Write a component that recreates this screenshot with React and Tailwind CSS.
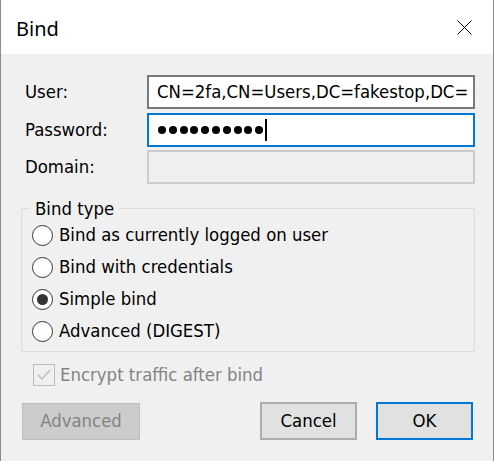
import React from 'react';

const font = "font-['DejaVu_Sans_Condensed','Liberation_Sans',sans-serif]";

const Radio = ({ checked, label }) => (
  <div className="flex items-center h-[32px] pl-[10px]">
    <div className="w-[21px] h-[21px] rounded-full border border-[#333333] bg-white flex items-center justify-center shrink-0">
      {checked && <div className="w-[11px] h-[11px] rounded-full bg-[#333333]" />}
    </div>
    <span className="ml-[6px] text-[18.4px] text-black leading-none">{label}</span>
  </div>
);

export default function App() {
  return (
    <div className={`w-[494px] h-[461px] bg-[#f0f0f0] border-x border-[#8c8c8c] flex flex-col ${font}`}>
      {/* Title bar */}
      <div className="h-[54px] bg-white flex items-center justify-between pl-[15px] pr-[21px] shrink-0">
        <span className="mt-[3px] font-['Noto_Sans',sans-serif] text-[20px] text-black leading-none">Bind</span>
        <svg width="15" height="15" viewBox="0 0 15 15" className="mt-[1px]">
          <path d="M0.5 0.5 L14.5 14.5 M14.5 0.5 L0.5 14.5" stroke="#000" strokeWidth="1" />
        </svg>
      </div>

      {/* Content */}
      <div className="flex-1 pl-[20px] pr-[18px] pt-[21px]">
        <div className="flex items-center h-[34px]">
          <label className="w-[126px] pl-[4px] text-[18.4px] text-black">User:</label>
          <div className="flex-1 h-full bg-white border-2 border-[#7a7a7a] flex items-center pl-[8px] overflow-hidden">
            <span className="text-[18.4px] text-black whitespace-nowrap">CN=2fa,CN=Users,DC=fakestop,DC=</span>
          </div>
        </div>
        <div className="flex items-center h-[34px] mt-[4px]">
          <label className="w-[126px] pl-[4px] text-[18.4px] text-black">Password:</label>
          <div className="flex-1 h-full bg-white border-2 border-[#0078d7] flex items-center pl-[9px]">
            <div className="flex gap-[2.8px]">
              {Array.from({ length: 10 }).map((_, i) => (
                <div key={i} className="w-[8px] h-[8px] rounded-full bg-black" />
              ))}
            </div>
            <div className="w-[1.5px] h-[22px] bg-black ml-[2px]" />
          </div>
        </div>
        <div className="flex items-center h-[34px] mt-[3px]">
          <label className="w-[126px] pl-[4px] text-[18.4px] text-black">Domain:</label>
          <div className="flex-1 h-full bg-[#f0f0f0] border-2 border-[#cccccc]" />
        </div>

        {/* Bind type group */}
        <fieldset className="mt-[14px] border border-[#dcdcdc] pb-[4px]">
          <legend className="ml-[8px] px-[5px] text-[18.4px] leading-[21px] text-black">Bind type</legend>
          <Radio label="Bind as currently logged on user" />
          <Radio label="Bind with credentials" />
          <Radio checked label="Simple bind" />
          <Radio label="Advanced (DIGEST)" />
        </fieldset>

        {/* Encrypt checkbox */}
        <div className="flex items-center h-[24px] mt-[11px] pl-[12px]">
          <div className="w-[22px] h-[22px] border border-[#bcbcbc] bg-[#f0f0f0] flex items-center justify-center shrink-0">
            <svg width="16" height="16" viewBox="0 0 16 16">
              <path d="M2 8 L6 12 L14 3" fill="none" stroke="#bcbcbc" strokeWidth="1.4" />
            </svg>
          </div>
          <span className="ml-[5px] text-[18.4px] text-[#838383] leading-none">Encrypt traffic after bind</span>
        </div>

        {/* Buttons */}
        <div className="flex items-center mt-[15px] pr-[2px]">
          <button className="ml-[1px] w-[118px] h-[37px] bg-[#cccccc] border border-[#bfbfbf] text-[18.4px] text-[#838383]">
            Advanced
          </button>
          <div className="flex-1" />
          <button className="w-[97px] h-[38px] bg-[#e1e1e1] border-2 border-[#adadad] text-[18.4px] text-black">
            Cancel
          </button>
          <button className="ml-[19px] w-[97px] h-[38px] bg-[#e1e1e1] border-2 border-[#0078d7] text-[18.4px] text-black">
            OK
          </button>
        </div>
      </div>
    </div>
  );
}
